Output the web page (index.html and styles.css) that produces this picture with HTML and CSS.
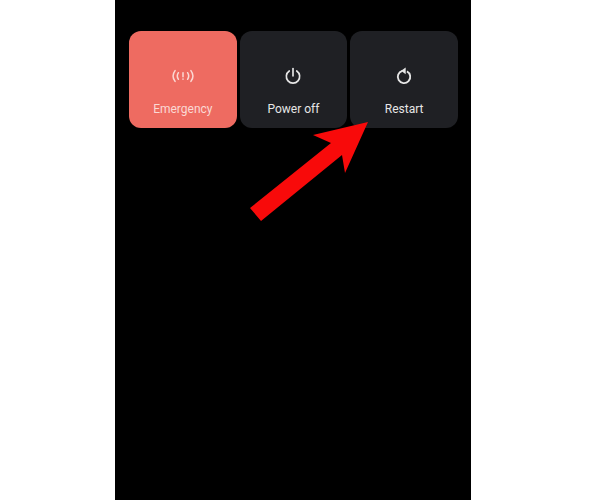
FILE: index.html
```html
<!DOCTYPE html>
<html lang="en">
<head>
<meta charset="utf-8">
<title>Power menu</title>
<link rel="stylesheet" href="styles.css">
</head>
<body>
<main class="phone">
  <div class="menu">
    <div class="tile tile-emergency">
      <svg class="icon" viewBox="0 0 24 24" fill="none" stroke="currentColor" stroke-width="1.800" stroke-linecap="round">
        <path d="M2.500 5.500C-0.500 9.500 -0.500 14.500 2.500 18.500"/>
        <path d="M6.500 8C4.800 10.500 4.800 13.500 6.500 16"/>
        <path d="M21.500 5.500C24.500 9.500 24.500 14.500 21.500 18.500"/>
        <path d="M17.500 8C19.200 10.500 19.200 13.500 17.500 16"/>
        <path d="M12 8V13"/>
        <path d="M12 15.500V16"/>
      </svg>
      <span class="label">Emergency</span>
    </div>
    <div class="tile">
      <svg class="icon" viewBox="0 0 24 24" fill="none" stroke="currentColor" stroke-width="2" stroke-linecap="round">
        <path d="M12 3V12"/>
        <path d="M7.500 6A8 8 0 1 0 16.500 6"/>
      </svg>
      <span class="label">Power off</span>
    </div>
    <div class="tile">
      <svg class="icon" viewBox="0 0 24 24" fill="none" stroke="currentColor" stroke-width="2.200">
        <path d="M15.500 6.400A7.500 7.500 0 1 1 10 5.800"/>
        <path class="icon-solid" d="M14 1.800L8.500 5.800L14 9.800Z"/>
      </svg>
      <span class="label">Restart</span>
    </div>
  </div>
  <svg class="arrow" viewBox="0 0 130 110">
    <polygon points="128,7 73,20 91,28 10,93 21,106 102,40 105,58"/>
  </svg>
</main>
</body>
</html>
```
FILE: styles.css
```css
html, body {
  margin: 0;
  height: 100%;
  background: #fff;
}

body {
  display: flex;
  justify-content: flex-start;
  font-family: Roboto, "Liberation Sans", sans-serif;
}

.phone {
  position: relative;
  box-sizing: border-box;
  width: 356px;
  height: 500px;
  margin-left: 115px;
  padding: 31px 13px 0 14px;
  background: #000;
}

.menu {
  display: grid;
  grid-template-columns: repeat(3, 1fr);
  gap: 3px;
}

.tile {
  display: flex;
  flex-direction: column;
  align-items: center;
  height: 97px;
  border-radius: 12px;
  background: #1f2024;
  color: #e6e6e6;
}

.tile-emergency {
  background: #ee6b61;
  color: #fbd9d4;
}

.icon {
  width: 20px;
  height: 20px;
  margin-top: 35px;
  overflow: visible;
}

.icon-solid {
  fill: currentColor;
  stroke: none;
}

.label {
  margin-top: 15px;
  font-size: 12px;
  line-height: 16px;
}

.arrow {
  position: absolute;
  left: 125px;
  top: 115px;
  width: 130px;
  height: 110px;
  fill: #f80a0a;
}
```
